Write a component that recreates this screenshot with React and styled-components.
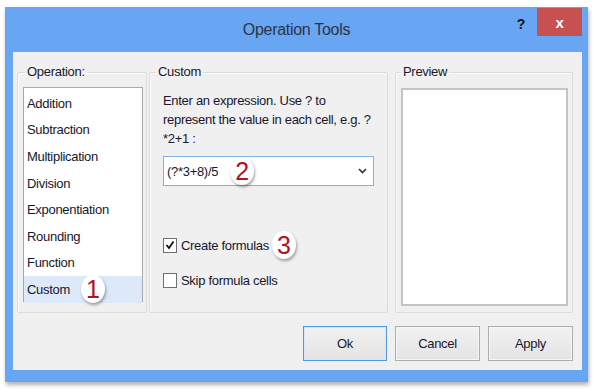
import React from 'react';
import styled, { createGlobalStyle } from 'styled-components';

const GlobalStyle = createGlobalStyle`
  body {
    margin: 0;
    background: #ffffff;
    font-family: "Liberation Sans", Arial, sans-serif;
    letter-spacing: -0.3px;
    color: #17172e;
  }
`;

const Page = styled.div`
  padding: 7px 0 0 5px;
  width: 594px;
  height: 389px;
  box-sizing: border-box;
`;

const Window = styled.div`
  width: 583px;
  height: 375px;
  background: #68a5f3;
  display: flex;
  flex-direction: column;
  box-shadow: 1px 3px 4px rgba(0, 0, 0, 0.3);
`;

const TitleBar = styled.div`
  height: 45px;
  display: grid;
  grid-template-columns: 1fr auto 1fr;
  align-items: center;
`;

const Title = styled.div`
  grid-column: 2;
  font-size: 16px;
  color: #2b3446;
  padding-top: 1px;
`;

const Controls = styled.div`
  grid-column: 3;
  justify-self: end;
  align-self: start;
  display: flex;
  align-items: flex-start;
  margin-top: 1px;
  margin-right: 6px;
`;

const Help = styled.span`
  font-weight: bold;
  font-size: 14px;
  color: #111;
  margin: 8px 12px 0 0;
`;

const Close = styled.div`
  width: 45px;
  height: 28px;
  background: #c75050;
  color: #fff;
  font-size: 15px;
  font-weight: bold;
  display: flex;
  align-items: center;
  justify-content: center;
`;

const Content = styled.div`
  margin: 0 6px 12px 8px;
  flex: 1;
  background: #f0f0f0;
  padding: 12px 9px 0 4px;
  display: flex;
  flex-direction: column;
`;

const GroupRow = styled.div`
  display: flex;
`;

const Group = styled.fieldset`
  margin: 0 0 0 ${p => p.$gap || 0}px;
  width: ${p => p.$w}px;
  height: 249px;
  box-sizing: border-box;
  border: 1px solid #dcdcdc;
  box-shadow: inset 1px 1px 0 #fafafa;
  border-radius: 2px;
  padding: ${p => p.$pad};
  min-width: 0;
`;

const Legend = styled.legend`
  font-size: 13px;
  line-height: 16px;
  padding: 0 2px;
  margin-left: ${p => p.$ml}px;
`;

const ListBox = styled.div`
  width: 120px;
  height: 215px;
  box-sizing: border-box;
  border: 1px solid #a6a9b2;
  background: #fff;
  padding-top: 2px;
`;

const ListItem = styled.div`
  height: 26.6px;
  display: flex;
  align-items: center;
  padding-left: 3px;
  font-size: 13px;
  background: ${p => (p.$selected ? '#dde8f8' : 'transparent')};
`;

const Badge = styled.span`
  width: 24px;
  height: 28px;
  margin: -4px 0 -4px ${p => p.$ml}px;
  flex: none;
  border-radius: 50%;
  background: #ffffff;
  box-shadow: 1px 2px 3px rgba(0, 0, 0, 0.35);
  color: #b0141c;
  font-size: 25px;
  letter-spacing: 0;
  line-height: 28px;
  display: inline-flex;
  align-items: center;
  justify-content: center;
`;

const Hint = styled.div`
  font-size: 13px;
  line-height: 19px;
  white-space: nowrap;
`;

const Combo = styled.div`
  margin-top: 8px;
  width: 211px;
  height: 30px;
  box-sizing: border-box;
  border: 1px solid #7fb3e8;
  background: #fff;
  display: flex;
  align-items: center;
  padding: 0 6px 0 3px;
  font-size: 13px;
`;

const ComboText = styled.span`
  flex: 1;
  display: flex;
  align-items: center;
`;

const CheckRow = styled.label`
  display: flex;
  align-items: center;
  height: 20px;
  margin-top: ${p => p.$mt}px;
  font-size: 13px;
`;

const Box = styled.span`
  width: 14px;
  height: 15px;
  box-sizing: border-box;
  border: 1px solid #6f6f6f;
  background: #fff;
  margin-right: 4px;
  display: inline-flex;
  align-items: center;
  justify-content: center;
  flex: none;
`;

const PreviewBox = styled.div`
  width: 167px;
  height: 218px;
  box-sizing: border-box;
  border: 2px solid #c4c4c8;
  background: #fff;
`;

const ButtonRow = styled.div`
  margin-top: 13px;
  display: flex;
  justify-content: flex-end;
  gap: 8px;
`;

const Button = styled.button`
  width: ${p => p.$w || 85}px;
  height: 35px;
  box-sizing: border-box;
  font-family: inherit;
  font-size: 13px;
  letter-spacing: -0.3px;
  color: #17172e;
  background: linear-gradient(#f2f2f2, #e3e3e3);
  border: 1px solid ${p => (p.$focus ? '#4d9be8' : '#adadad')};
  box-shadow: inset 0 0 0 1px ${p => (p.$focus ? '#d6e8fa' : '#f6f6f6')};
  padding: 0;
`;

const operations = [
  'Addition',
  'Subtraction',
  'Multiplication',
  'Division',
  'Exponentiation',
  'Rounding',
  'Function',
  'Custom',
];

export default function App() {
  return (
    <>
      <GlobalStyle />
      <Page>
        <Window>
          <TitleBar>
            <Title>Operation Tools</Title>
            <Controls>
              <Help>?</Help>
              <Close>x</Close>
            </Controls>
          </TitleBar>
          <Content>
            <GroupRow>
              <Group $w={130} $pad="7px 4px 0 5px">
                <Legend $ml={2}>Operation:</Legend>
                <ListBox>
                  {operations.map(op => (
                    <ListItem key={op} $selected={op === 'Custom'}>
                      {op}
                      {op === 'Custom' && <Badge $ml={11}>1</Badge>}
                    </ListItem>
                  ))}
                </ListBox>
              </Group>
              <Group $w={239} $gap={2} $pad="11px 6px 0 13px">
                <Legend $ml={-7}>Custom</Legend>
                <Hint>
                  Enter an expression. Use ? to
                  <br />
                  represent the value in each cell, e.g. ?
                  <br />
                  *2+1 :
                </Hint>
                <Combo>
                  <ComboText>
                    (?*3+8)/5
                    <Badge $ml={12}>2</Badge>
                  </ComboText>
                  <svg width="9" height="6" viewBox="0 0 9 6">
                    <path d="M1 1 L4.5 4.5 L8 1" fill="none" stroke="#333" strokeWidth="1.6" />
                  </svg>
                </Combo>
                <CheckRow $mt={49}>
                  <Box>
                    <svg width="10" height="10" viewBox="0 0 10 10">
                      <path d="M1.5 5 L4 8 L8.5 1.5" fill="none" stroke="#111" strokeWidth="1.8" />
                    </svg>
                  </Box>
                  Create formulas
                  <Badge $ml={3}>3</Badge>
                </CheckRow>
                <CheckRow $mt={15}>
                  <Box />
                  Skip formula cells
                </CheckRow>
              </Group>
              <Group $w={178} $gap={7} $pad="8px 4px 0 5px">
                <Legend $ml={0}>Preview</Legend>
                <PreviewBox />
              </Group>
            </GroupRow>
            <ButtonRow>
              <Button $w={84} $focus>Ok</Button>
              <Button>Cancel</Button>
              <Button>Apply</Button>
            </ButtonRow>
          </Content>
        </Window>
      </Page>
    </>
  );
}
